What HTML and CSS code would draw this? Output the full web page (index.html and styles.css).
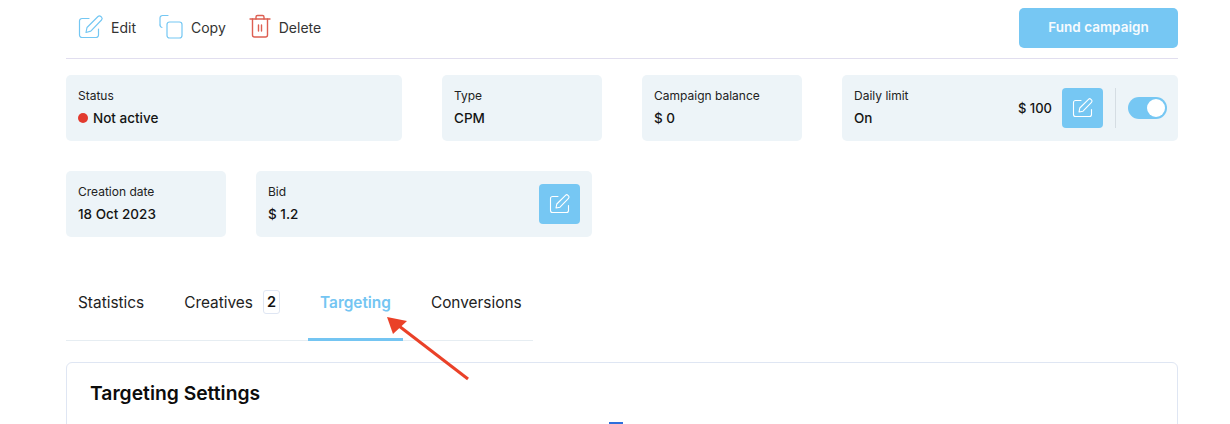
FILE: index.html
```html
<!DOCTYPE html>
<html lang="en">
<head>
  <meta charset="UTF-8" />
  <title>Campaign</title>
  <link rel="stylesheet" href="styles.css">
</head>
<body>
  <div class="wrapper">
    <header class="toolbar">
      <div class="actions">
        <a class="action action-edit" href="#edit">
          <svg width="26" height="26" viewBox="0 0 26 26" fill="none" stroke="#74c7f3" stroke-width="1.2" stroke-linecap="round" stroke-linejoin="round">
            <path d="M11 4.500H4a2.500 2.500 0 0 0-2.500 2.500v14A2.500 2.500 0 0 0 4 23.500h14a2.500 2.500 0 0 0 2.500-2.500v-6"/>
            <path d="M8 18.500l1-5L20 2.500a2 2 0 0 1 2.800 0l.7.7a2 2 0 0 1 0 2.800L12.800 17.200z"/>
          </svg>
          Edit
        </a>
        <a class="action action-copy" href="#copy">
          <svg width="24" height="26" viewBox="0 0 24 26" fill="none" stroke="#74c7f3" stroke-width="1.2" stroke-linecap="round" stroke-linejoin="round">
            <path d="M1 11V4a2.500 2.500 0 0 1 2.500-2.500H9"/>
            <path d="M1 11a2.500 2.500 0 0 0 2 2.500"/>
            <rect x="8" y="8" width="15" height="16" rx="2.500"/>
          </svg>
          Copy
        </a>
        <a class="action action-delete" href="#delete">
          <svg width="22" height="26" viewBox="0 0 22 26" fill="none" stroke="#dd5f52" stroke-width="1.4" stroke-linecap="round" stroke-linejoin="round">
            <path d="M1 5h20"/>
            <path d="M7 5V3a1.500 1.500 0 0 1 1.500-1.500h5A1.500 1.500 0 0 1 15 3v2"/>
            <path d="M3.500 5v16a2 2 0 0 0 2 2h11a2 2 0 0 0 2-2V5"/>
            <path d="M9.500 11v6M12.500 11v6"/>
          </svg>
          Delete
        </a>
      </div>
      <button class="fund-btn">Fund campaign</button>
    </header>

    <section class="cards cards-top">
      <div class="card">
        <div class="card-text">
          <span class="card-label">Status</span>
          <span class="card-value"><i class="dot"></i>Not active</span>
        </div>
      </div>
      <div class="card">
        <div class="card-text">
          <span class="card-label">Type</span>
          <span class="card-value">CPM</span>
        </div>
      </div>
      <div class="card">
        <div class="card-text">
          <span class="card-label">Campaign balance</span>
          <span class="card-value">$ 0</span>
        </div>
      </div>
      <div class="card card-limit">
        <div class="card-text">
          <span class="card-label">Daily limit</span>
          <span class="card-value">On</span>
        </div>
        <div class="card-side">
          <span class="amount">$ 100</span>
          <button class="edit-btn" aria-label="Edit daily limit">
            <svg width="22" height="22" viewBox="0 0 22 22" fill="none" stroke="#fff" stroke-width="1.1" stroke-linecap="round" stroke-linejoin="round">
              <path d="M9 3.500H3.500a2 2 0 0 0-2 2v12a2 2 0 0 0 2 2h14a2 2 0 0 0 2-2v-5"/>
              <path d="M7 15l.8-4L16.500 2.300a1.700 1.700 0 0 1 2.400 0l.6.6a1.700 1.700 0 0 1 0 2.400L11 14.200z"/>
            </svg>
          </button>
          <span class="divider"></span>
          <span class="toggle"><i class="toggle-knob"></i></span>
        </div>
      </div>
    </section>

    <section class="cards cards-bottom">
      <div class="card">
        <div class="card-text">
          <span class="card-label">Creation date</span>
          <span class="card-value">18 Oct 2023</span>
        </div>
      </div>
      <div class="card">
        <div class="card-text">
          <span class="card-label">Bid</span>
          <span class="card-value">$ 1.2</span>
        </div>
        <div class="card-side">
          <button class="edit-btn" aria-label="Edit bid">
            <svg width="22" height="22" viewBox="0 0 22 22" fill="none" stroke="#fff" stroke-width="1.1" stroke-linecap="round" stroke-linejoin="round">
              <path d="M9 3.500H3.500a2 2 0 0 0-2 2v12a2 2 0 0 0 2 2h14a2 2 0 0 0 2-2v-5"/>
              <path d="M7 15l.8-4L16.500 2.300a1.700 1.700 0 0 1 2.400 0l.6.6a1.700 1.700 0 0 1 0 2.400L11 14.200z"/>
            </svg>
          </button>
        </div>
      </div>
    </section>

    <nav class="tabs">
      <a class="tab" href="#statistics">Statistics</a>
      <a class="tab" href="#creatives">Creatives <span class="tab-count">2</span></a>
      <a class="tab active" href="#targeting">Targeting</a>
      <a class="tab" href="#conversions">Conversions</a>
    </nav>

    <section class="panel">
      <h2>Targeting Settings</h2>
      <span class="caret"></span>
    </section>
  </div>

  <svg class="arrow" width="90" height="70" viewBox="0 0 90 70" fill="none">
    <path d="M83 64L14 11" stroke="#ea4128" stroke-width="3"/>
    <path d="M2 2L22 6L8 19z" fill="#ea4128"/>
  </svg>
</body>
</html>
```

FILE: styles.css
```css
html {
  overflow: hidden;
}

body {
  margin: 0;
  height: 424px;
  overflow: hidden;
  background: white;
  color: #141414;
  font-family: "Inter", Arial, sans-serif;
  position: relative;
}

.wrapper {
  padding: 0 52px 0 66px;
}

.toolbar {
  display: flex;
  align-items: center;
  justify-content: space-between;
  height: 59px;
  padding: 0 0 2px 12px;
  box-sizing: border-box;
  border-bottom: 1px solid #e1deef;
}

.actions {
  display: flex;
  align-items: center;
  gap: 23px;
  margin-bottom: 2px;
}

.action {
  display: flex;
  align-items: center;
  gap: 7px;
  color: #333;
  font-size: 14px;
  text-decoration: none;
}

.action-copy,
.action-delete {
  gap: 8px;
}

.fund-btn {
  width: 159px;
  height: 40px;
  padding: 0 0 2px;
  background: #76c7f3;
  color: #f6fbfe;
  border: none;
  border-radius: 5px;
  font-family: inherit;
  font-size: 13.5px;
  font-weight: 600;
}

.cards {
  display: grid;
  height: 66px;
}

.cards-top {
  grid-template-columns: 336px 160px 160px 336px;
  gap: 40px;
  margin-top: 16px;
}

.cards-bottom {
  grid-template-columns: 160px 336px;
  gap: 30px;
  margin-top: 30px;
}

.card {
  display: flex;
  align-items: center;
  justify-content: space-between;
  padding: 0 12px;
  background: #edf4f8;
  border-radius: 5px;
}

.card-limit {
  padding-right: 11px;
}

.card-text {
  display: flex;
  flex-direction: column;
  gap: 7px;
  padding-bottom: 1px;
}

.card-label {
  font-size: 12px;
  line-height: 14px;
  color: #222;
}

.card-value {
  display: flex;
  align-items: center;
  font-size: 13.5px;
  line-height: 16px;
  font-weight: 500;
}

.dot {
  width: 10px;
  height: 10px;
  margin-right: 5px;
  border-radius: 50%;
  background: #e23a2e;
}

.card-side {
  display: flex;
  align-items: center;
}

.amount {
  margin-right: 10px;
  font-size: 13px;
  font-weight: 500;
}

.edit-btn {
  display: flex;
  align-items: center;
  justify-content: center;
  width: 41px;
  height: 40px;
  padding: 0;
  background: #76c7f3;
  border: none;
  border-radius: 4px;
}

.divider {
  width: 1px;
  height: 40px;
  margin: 0 12px;
  background: #d5dde3;
}

.toggle {
  display: flex;
  align-items: center;
  justify-content: flex-end;
  width: 39px;
  height: 22px;
  padding: 0 2px;
  box-sizing: border-box;
  background: #76c7f3;
  border-radius: 11px;
}

.toggle-knob {
  width: 18px;
  height: 18px;
  border-radius: 50%;
  background: white;
}

.tabs {
  display: flex;
  width: 467px;
  height: 56px;
  margin-top: 47px;
  border-bottom: 1px solid #e6edf2;
}

.tab {
  display: flex;
  align-items: flex-start;
  padding: 9px 12px 0;
  margin-right: 16px;
  color: #222;
  font-size: 15.4px;
  line-height: 20px;
  text-decoration: none;
}

.tab-count {
  margin: -3px 0 0 10px;
  padding: 0 3px;
  font-size: 14.5px;
  line-height: 22px;
  font-weight: 600;
  color: #111;
  border: 1px solid #dfe6f3;
  border-radius: 3px;
}

.tab.active {
  color: #74c5f2;
  font-weight: 600;
  border-bottom: 3px solid #74c5f2;
  margin-bottom: -1px;
}

.panel {
  position: relative;
  height: 120px;
  margin-top: 21px;
  padding: 18px 23px;
  border: 1px solid #dfe6f3;
  border-radius: 6px;
}

.panel h2 {
  margin: 0;
  font-size: 19.3px;
  line-height: 24px;
  font-weight: 600;
  color: #0c0c0c;
}

.caret {
  position: absolute;
  left: 542px;
  top: 59px;
  width: 14px;
  height: 2px;
  background: #2e6fdc;
}

.arrow {
  position: absolute;
  left: 385px;
  top: 315px;
}
```
